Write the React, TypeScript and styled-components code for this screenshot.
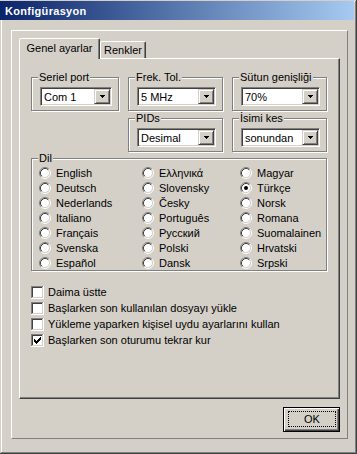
import React, { useState } from 'react';
import styled, { createGlobalStyle } from 'styled-components';

const GlobalStyle = createGlobalStyle`
  html, body {
    margin: 0;
    padding: 0;
    background: #d4d0c8;
  }
  body {
    font-family: "Liberation Sans", Arial, sans-serif;
    font-size: 11px;
    color: #000;
  }
  * {
    box-sizing: border-box;
  }
`;

const languages = [
  'English', 'Deutsch', 'Nederlands', 'Italiano', 'Français', 'Svenska', 'Español',
  'Ελληνικά', 'Slovensky', 'Česky', 'Português', 'Русский', 'Polski', 'Dansk',
  'Magyar', 'Türkçe', 'Norsk', 'Romana', 'Suomalainen', 'Hrvatski', 'Srpski',
];

const options = [
  { label: 'Daima üstte', checked: false },
  { label: 'Başlarken son kullanılan dosyayı yükle', checked: false },
  { label: 'Yükleme yaparken kişisel uydu ayarlarını kullan', checked: false },
  { label: 'Başlarken son oturumu tekrar kur', checked: true },
];

const Window = styled.div`
  width: 357px;
  height: 454px;
  display: flex;
  flex-direction: column;
  padding: 1px 3px 0 0;
  background: #d4d0c8;
  box-shadow: inset -1px -1px #404040, inset 1px 1px #d4d0c8,
    inset -2px -2px #808080, inset 2px 2px #fff;
`;

const TitleBar = styled.div`
  height: 19px;
  display: flex;
  align-items: center;
  padding-left: 5px;
  background: linear-gradient(to right, #0a246a, #a6caf0);
  color: #fff;
  font-weight: bold;
  font-size: 11px;
  letter-spacing: 0.3px;
`;

const Frame = styled.div`
  margin: 10px 0 0 11px;
  width: 337px;
  height: 409px;
  display: flex;
  flex-direction: column;
  padding: 7px 7px 6px 7px;
  border: 1px solid;
  border-color: #fff #808080 #808080 #fff;
`;

const TabStrip = styled.div`
  height: 20px;
  display: flex;
  align-items: flex-end;
`;

const Tab = styled.button<{ $active: boolean; $width: number }>`
  position: relative;
  z-index: ${(p) => (p.$active ? 1 : 0)};
  width: ${(p) => p.$width}px;
  height: ${(p) => (p.$active ? 21 : 17)}px;
  margin-bottom: ${(p) => (p.$active ? -1 : 0)}px;
  padding: 0 0 ${(p) => (p.$active ? 2 : 0)}px;
  font: inherit;
  color: #000;
  background: #d4d0c8;
  border: 1px solid;
  border-bottom: none;
  border-color: #fff #404040 transparent #fff;
  border-radius: 2px 2px 0 0;
  box-shadow: inset -1px 0 #808080;
  cursor: default;
`;

const TabPage = styled.div`
  flex: 1;
  display: flex;
  flex-direction: column;
  padding: 18px 11px 0 11px;
  border: 1px solid;
  border-color: #fff #404040 #404040 #fff;
  box-shadow: inset -1px -1px #808080;
`;

const SettingsGrid = styled.div`
  display: grid;
  grid-template-columns: 89px 96px 96px;
  column-gap: 8px;
  row-gap: 6px;
`;

const GroupBox = styled.div<{ $col?: number; $span?: number }>`
  position: relative;
  grid-column: ${(p) => (p.$span ? `1 / span ${p.$span}` : p.$col ? `${p.$col}` : 'auto')};
  margin: 0 1px 1px 0;
  border: 1px solid #808080;
  box-shadow: inset 1px 1px #fff, 1px 1px #fff;
  padding: 9px 6px 4px 8px;
`;

const GroupLabel = styled.span`
  position: absolute;
  top: -7px;
  left: 6px;
  padding: 0 1px;
  line-height: 13px;
  background: #d4d0c8;
`;

const Combo = styled.div`
  height: 19px;
  display: flex;
  padding: 1px;
  background: #fff;
  border: 1px solid;
  border-color: #808080 #fff #fff #808080;
  box-shadow: inset 1px 1px #404040, inset -1px -1px #d4d0c8;
`;

const ComboValue = styled.span`
  flex: 1;
  display: flex;
  align-items: center;
  padding-left: 2px;
`;

const DropButton = styled.span`
  width: 16px;
  display: flex;
  align-items: center;
  justify-content: center;
  background: #d4d0c8;
  border: 1px solid;
  border-color: #d4d0c8 #404040 #404040 #d4d0c8;
  box-shadow: inset 1px 1px #fff, inset -1px -1px #808080;
`;

const LangGroup = styled(GroupBox)`
  margin-top: -1px;
  padding: 6px 6px 0 7px;
`;

const RadioGrid = styled.div`
  display: grid;
  grid-template-columns: 103px 98px 1fr;
  grid-template-rows: repeat(7, 15px);
  grid-auto-flow: column;
`;

const RadioItem = styled.label`
  display: flex;
  align-items: center;
  gap: 5px;
  white-space: nowrap;
`;

const CheckList = styled.div`
  display: flex;
  flex-direction: column;
  margin-top: 12px;
`;

const CheckItem = styled.label`
  height: 16px;
  display: flex;
  align-items: center;
  gap: 4px;
  white-space: nowrap;
`;

const Footer = styled.div`
  display: flex;
  justify-content: flex-end;
  margin-top: 8px;
`;

const Button = styled.button`
  width: 57px;
  height: 25px;
  display: flex;
  padding: 3px 3px 4px 4px;
  font: inherit;
  color: #000;
  background: #d4d0c8;
  border: 1px solid #000;
  box-shadow: inset 1px 1px #fff, inset -1px -1px #404040, inset -2px -2px #808080;
`;

const FocusRing = styled.span`
  flex: 1;
  display: flex;
  align-items: center;
  justify-content: center;
  border: 1px dotted #000;
`;

const Arrow = () => (
  <svg width="5" height="3" viewBox="0 0 5 3">
    <path d="M0 0h5v1h-1v1h-1v1h-1v-1h-1v-1h-1z" fill="#000" />
  </svg>
);

const RadioIcon = ({ checked }: { checked: boolean }) => (
  <svg width="12" height="12" viewBox="0 0 12 12">
    <circle cx="6" cy="6" r="4.5" fill="#fff" />
    <path d="M2.11 9.89A5.5 5.5 0 0 1 9.89 2.11" fill="none" stroke="#808080" />
    <path d="M9.89 2.11A5.5 5.5 0 0 1 2.11 9.89" fill="none" stroke="#fff" />
    <path d="M2.82 9.18A4.5 4.5 0 0 1 9.18 2.82" fill="none" stroke="#404040" />
    <path d="M9.18 2.82A4.5 4.5 0 0 1 2.82 9.18" fill="none" stroke="#d4d0c8" />
    {checked && <circle cx="6" cy="6" r="2" fill="#000" />}
  </svg>
);

const CheckIcon = ({ checked }: { checked: boolean }) => (
  <svg width="13" height="13" viewBox="0 0 13 13">
    <rect x="0" y="0" width="13" height="13" fill="#fff" />
    <path d="M0 0h12v1h-12zM0 0h1v12h-1z" fill="#808080" />
    <path d="M1 1h10v1h-10zM1 1h1v10h-1z" fill="#404040" />
    <path d="M1 11h11v1h-11zM11 1h1v11h-1z" fill="#d4d0c8" />
    {checked && (
      <path
        d="M3 5h1v3h-1zM4 6h1v3h-1zM5 7h1v3h-1zM6 6h1v3h-1zM7 5h1v3h-1zM8 4h1v3h-1zM9 3h1v3h-1z"
        fill="#000"
      />
    )}
  </svg>
);

const ComboBox = ({ value }: { value: string }) => (
  <Combo>
    <ComboValue>{value}</ComboValue>
    <DropButton>
      <Arrow />
    </DropButton>
  </Combo>
);

const App: React.FC = () => {
  const [tab, setTab] = useState(0);
  const [lang, setLang] = useState('Türkçe');
  const [checks, setChecks] = useState(options.map((o) => o.checked));

  const toggle = (i: number) => setChecks(checks.map((c, j) => (j === i ? !c : c)));

  return (
    <>
      <GlobalStyle />
      <Window>
        <TitleBar>Konfigürasyon</TitleBar>
        <Frame>
          <TabStrip>
            <Tab $active={tab === 0} $width={81} onClick={() => setTab(0)}>
              Genel ayarlar
            </Tab>
            <Tab $active={tab === 1} $width={46} onClick={() => setTab(1)}>
              Renkler
            </Tab>
          </TabStrip>
          <TabPage>
            <SettingsGrid>
              <GroupBox>
                <GroupLabel>Seriel port</GroupLabel>
                <ComboBox value="Com 1" />
              </GroupBox>
              <GroupBox>
                <GroupLabel>Frek. Tol.</GroupLabel>
                <ComboBox value="5 MHz" />
              </GroupBox>
              <GroupBox>
                <GroupLabel>Sütun genişliği</GroupLabel>
                <ComboBox value="70%" />
              </GroupBox>
              <GroupBox $col={2}>
                <GroupLabel>PIDs</GroupLabel>
                <ComboBox value="Desimal" />
              </GroupBox>
              <GroupBox $col={3}>
                <GroupLabel>İsimi kes</GroupLabel>
                <ComboBox value="sonundan" />
              </GroupBox>
              <LangGroup $span={3}>
                <GroupLabel>Dil</GroupLabel>
                <RadioGrid>
                  {languages.map((l) => (
                    <RadioItem key={l} onClick={() => setLang(l)}>
                      <RadioIcon checked={lang === l} />
                      {l}
                    </RadioItem>
                  ))}
                </RadioGrid>
              </LangGroup>
            </SettingsGrid>
            <CheckList>
              {options.map((o, i) => (
                <CheckItem key={o.label} onClick={() => toggle(i)}>
                  <CheckIcon checked={checks[i]} />
                  {o.label}
                </CheckItem>
              ))}
            </CheckList>
          </TabPage>
          <Footer>
            <Button>
              <FocusRing>OK</FocusRing>
            </Button>
          </Footer>
        </Frame>
      </Window>
    </>
  );
};

export default App;
